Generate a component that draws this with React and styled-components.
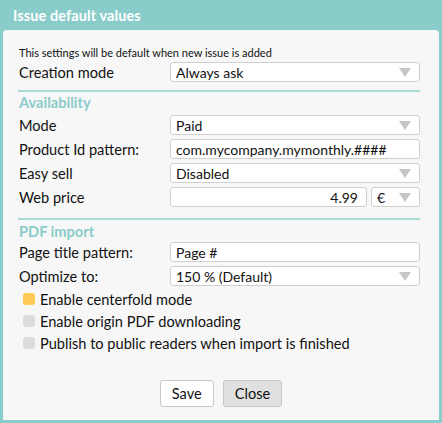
import { createGlobalStyle, styled } from "styled-components"

const teal = "#8accc9"

const GlobalStyle = createGlobalStyle`
    html, body {
        margin: 0;
        padding: 0;
        background: ${teal};
    }
    body {
        font-family: Lato, "Open Sans", sans-serif;
        color: #111;
    }
`

const Dialog = styled.div`
    width: 442px;
    height: 423px;
    box-sizing: border-box;
    background: ${teal};
    padding: 0 3px 3px 3px;
    display: flex;
    flex-direction: column;
`

const Title = styled.div`
    height: 30px;
    padding-left: 10px;
    display: flex;
    align-items: center;
    color: #fff;
    font-weight: bold;
    font-size: 14.5px;
    letter-spacing: 0.1px;
`

const Body = styled.div`
    flex: 1;
    background: #f7f7f7;
    border-radius: 4px 4px 0 0;
    padding: 16px 19px 0 15px;
    display: flex;
    flex-direction: column;
`

const Note = styled.div`
    font-size: 11px;
    line-height: 14px;
    padding-left: 1px;
`

const Row = styled.div`
    display: grid;
    grid-template-columns: 152px 1fr;
    align-items: center;
    height: 24px;
    font-size: 14.6px;
`

const Label = styled.div`
    padding-left: 1px;
`

const Divider = styled.div`
    height: 2px;
    background: #a9dad7;
    margin: ${(p) => p.$m || "8px 0 2px"};
`

const Section = styled.div`
    color: ${teal};
    font-weight: bold;
    font-size: 14.6px;
    line-height: 17px;
    padding-left: 1px;
    margin-bottom: ${(p) => p.$mb || "2px"};
`

const Field = styled.div`
    height: 20px;
    box-sizing: border-box;
    background: #fff;
    border: 1px solid #cfcfcf;
    border-radius: 3px;
    display: flex;
    align-items: center;
    padding: 0 8px 0 5px;
    font-size: 14px;
    justify-content: ${(p) => (p.$right ? "flex-end" : "space-between")};
    width: ${(p) => p.$w || "auto"};
    flex: ${(p) => (p.$grow ? 1 : "none")};
`

const Arrow = styled.span`
    width: 0;
    height: 0;
    border-left: 6px solid transparent;
    border-right: 6px solid transparent;
    border-top: 9px solid #c6c6c6;
`

const Pair = styled.div`
    display: flex;
    gap: 4px;
`

const Check = styled.div`
    display: flex;
    align-items: center;
    gap: 5px;
    height: 22px;
    font-size: 14.6px;
    padding-left: 5px;
`

const Box = styled.span`
    width: 12px;
    height: 12px;
    border-radius: 3px;
    background: ${(p) => (p.$on ? "#ffca55" : "#dcdcdc")};
`

const Buttons = styled.div`
    display: flex;
    justify-content: center;
    gap: 9px;
    margin-top: 26px;
    padding-left: 4px;
`

const Button = styled.div`
    height: 27px;
    box-sizing: border-box;
    padding: 0 11px;
    display: flex;
    align-items: center;
    font-size: 14.6px;
    border: 1px solid #c8c8c8;
    border-radius: 3px;
    background: ${(p) => (p.$gray ? "#e0e0e0" : "#fff")};
`

const Select = ({ children, w, grow }) => (
    <Field $w={w} $grow={grow}>
        <span>{children}</span>
        <Arrow />
    </Field>
)

const App = () => {
    return <>
        <GlobalStyle />
        <Dialog>
            <Title>Issue default values</Title>
            <Body>
                <Note>This settings will be default when new issue is added</Note>
                <Row>
                    <Label>Creation mode</Label>
                    <Select>Always ask</Select>
                </Row>
                <Divider $m="6px 0 2px" />
                <Section>Availability</Section>
                <Row>
                    <Label>Mode</Label>
                    <Select>Paid</Select>
                </Row>
                <Row>
                    <Label>Product Id pattern:</Label>
                    <Field>com.mycompany.mymonthly.####</Field>
                </Row>
                <Row>
                    <Label>Easy sell</Label>
                    <Select>Disabled</Select>
                </Row>
                <Row>
                    <Label>Web price</Label>
                    <Pair>
                        <Field $grow $right>4.99</Field>
                        <Select w="49px">€</Select>
                    </Pair>
                </Row>
                <Divider $m="9px 0 3px" />
                <Section $mb="0px">PDF import</Section>
                <Row>
                    <Label>Page title pattern:</Label>
                    <Field>Page #</Field>
                </Row>
                <Row>
                    <Label>Optimize to:</Label>
                    <Select>150 % (Default)</Select>
                </Row>
                <Check><Box $on />Enable centerfold mode</Check>
                <Check><Box />Enable origin PDF downloading</Check>
                <Check><Box />Publish to public readers when import is finished</Check>
                <Buttons>
                    <Button>Save</Button>
                    <Button $gray>Close</Button>
                </Buttons>
            </Body>
        </Dialog>
    </>
}

export default App
